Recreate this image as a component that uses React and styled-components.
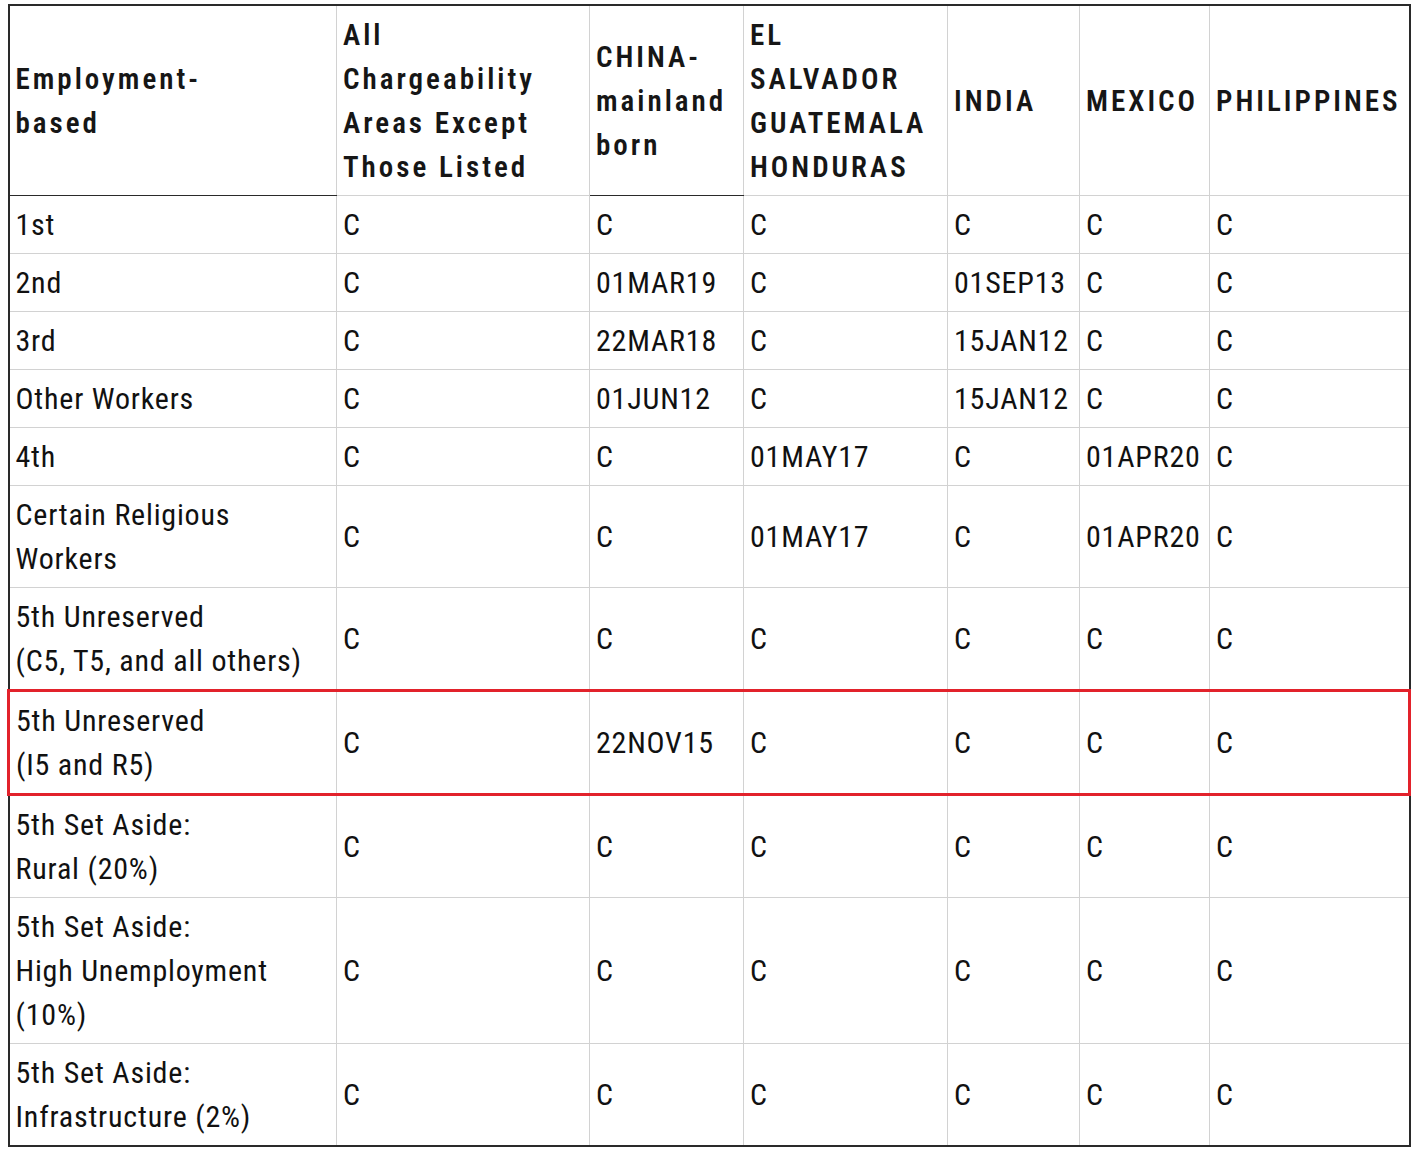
import React from 'react';
import styled, { createGlobalStyle, css } from 'styled-components';

const GlobalStyle = createGlobalStyle`
  body {
    margin: 0;
    background: #fff;
  }
`;

const Page = styled.div`
  padding: 4px 0 0 7px;
`;

const Sheet = styled.table`
  border-collapse: collapse;
  table-layout: fixed;
  width: 1401px;
  border: 2px solid #2a2a2a;
  font-family: 'Roboto Condensed', 'Liberation Sans Narrow', Roboto, sans-serif;
  font-size: 30px;
  line-height: 44px;
  color: #111;
`;

const cellBase = css`
  border: 1px solid #d2d2d2;
  padding: 7px 7px 6px 6px;
  vertical-align: middle;
  text-align: left;
  white-space: nowrap;
  ${props =>
    props.$darkLeft &&
    css`
      border-left: 1px solid #2a2a2a;
    `}
  ${props =>
    props.$hl &&
    css`
      border-top: 3px solid #e2222b;
      border-bottom: 3px solid #e2222b;
    `}
  ${props =>
    props.$hlLeft &&
    css`
      border-left: 3px solid #e2222b;
    `}
  ${props =>
    props.$hlRight &&
    css`
      border-right: 3px solid #e2222b;
    `}
`;

const HeadCell = styled.th`
  ${cellBase}
  font-weight: 600;
  font-size: 29px;
  letter-spacing: 3px;
  color: #161616;
  ${props =>
    props.$darkBottom &&
    css`
      border-bottom: 1px solid #2a2a2a;
    `}
`;

const Cell = styled.td`
  ${cellBase}
  font-weight: 400;
  letter-spacing: 0.8px;
`;

const widths = [328, 253, 154, 204, 132, 130, 200];

const header = [
  ['Employment-', 'based'],
  ['All', 'Chargeability', 'Areas Except', 'Those Listed'],
  ['CHINA-', 'mainland', 'born'],
  ['EL', 'SALVADOR', 'GUATEMALA', 'HONDURAS'],
  ['INDIA'],
  ['MEXICO'],
  ['PHILIPPINES'],
];

const C = 'C';

const rows = [
  { label: ['1st'], cells: [C, C, C, C, C, C] },
  { label: ['2nd'], cells: [C, '01MAR19', C, '01SEP13', C, C] },
  { label: ['3rd'], cells: [C, '22MAR18', C, '15JAN12', C, C] },
  { label: ['Other Workers'], cells: [C, '01JUN12', C, '15JAN12', C, C] },
  { label: ['4th'], cells: [C, C, '01MAY17', C, '01APR20', C] },
  { label: ['Certain Religious', 'Workers'], cells: [C, C, '01MAY17', C, '01APR20', C] },
  { label: ['5th Unreserved', '(C5, T5, and all others)'], cells: [C, C, C, C, C, C] },
  { label: ['5th Unreserved', '(I5 and R5)'], cells: [C, '22NOV15', C, C, C, C], highlight: true },
  { label: ['5th Set Aside:', 'Rural (20%)'], cells: [C, C, C, C, C, C] },
  { label: ['5th Set Aside:', 'High Unemployment', '(10%)'], cells: [C, C, C, C, C, C] },
  { label: ['5th Set Aside:', 'Infrastructure (2%)'], cells: [C, C, C, C, C, C] },
];

const darkCols = [2, 5];

const Lines = ({ lines }) =>
  lines.map((line, i) => (
    <React.Fragment key={i}>
      {i > 0 && <br />}
      {line}
    </React.Fragment>
  ));

export default function App() {
  return (
    <>
      <GlobalStyle />
      <Page>
        <Sheet>
          <colgroup>
            {widths.map((w, i) => (
              <col key={i} style={{ width: w }} />
            ))}
          </colgroup>
          <thead>
            <tr>
              {header.map((lines, i) => (
                <HeadCell
                  key={i}
                  $darkLeft={darkCols.includes(i)}
                  $darkBottom={i === 0 || i === 2}
                >
                  <Lines lines={lines} />
                </HeadCell>
              ))}
            </tr>
          </thead>
          <tbody>
            {rows.map((row, r) => {
              const all = [row.label, ...row.cells.map(c => [c])];
              return (
                <tr key={r}>
                  {all.map((lines, i) => (
                    <Cell
                      key={i}
                      $darkLeft={darkCols.includes(i)}
                      $hl={row.highlight}
                      $hlLeft={row.highlight && i === 0}
                      $hlRight={row.highlight && i === all.length - 1}
                    >
                      <Lines lines={lines} />
                    </Cell>
                  ))}
                </tr>
              );
            })}
          </tbody>
        </Sheet>
      </Page>
    </>
  );
}
